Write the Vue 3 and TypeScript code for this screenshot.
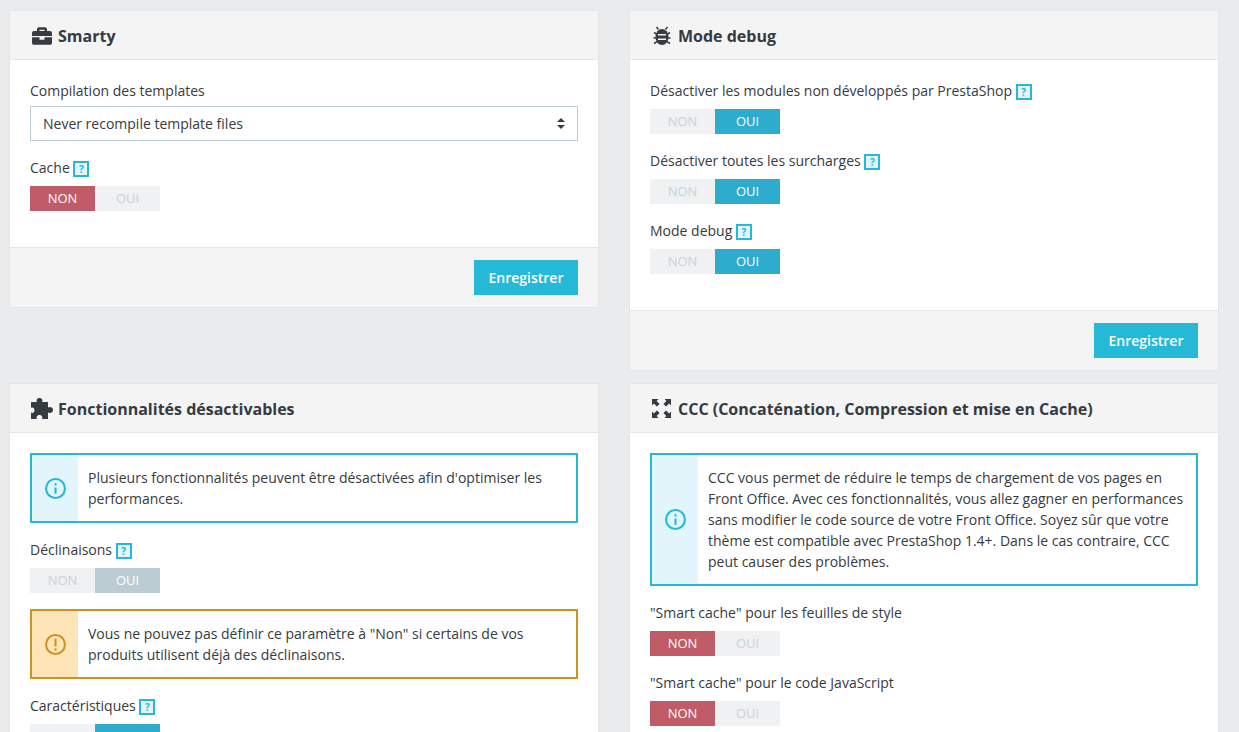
<script setup lang="ts">
interface Field { kind: 'switch'; label: string; help?: boolean; value: 'on' | 'off' | 'locked' }
interface Note { kind: 'info' | 'warn'; text: string }
type Item = Field | Note

const briefcase = 'M320 336c0 8.84-7.16 16-16 16h-96c-8.84 0-16-7.16-16-16v-48H0v144c0 25.6 22.4 48 48 48h416c25.6 0 48-22.4 48-48V288H320v48zm144-208h-80V80c0-25.6-22.4-48-48-48H176c-25.6 0-48 22.4-48 48v48H48c-25.6 0-48 22.4-48 48v80h512v-80c0-25.6-22.4-48-48-48zm-144 0H192V96h128v32z'
const puzzle = 'M0 4H6C5 2.5 5.8 0 8.5 0C11.2 0 12 2.5 11 4H17V9.5C18.5 8.5 22 8.8 22 12C22 15.2 18.5 15.5 17 14.5V21H11C12 19.5 11 17 8.5 17C6 17 5 19.5 6 21H0V14.5C1.5 15.5 3.5 14.5 3.5 12.3C3.5 10 1.5 9 0 10Z'

const debugFields: Item[] = [
  { kind: 'switch', label: 'Désactiver les modules non développés par PrestaShop', help: true, value: 'on' },
  { kind: 'switch', label: 'Désactiver toutes les surcharges', help: true, value: 'on' },
  { kind: 'switch', label: 'Mode debug', help: true, value: 'on' },
]
const featureItems: Item[] = [
  { kind: 'info', text: "Plusieurs fonctionnalités peuvent être désactivées afin d'optimiser les performances." },
  { kind: 'switch', label: 'Déclinaisons', help: true, value: 'locked' },
  { kind: 'warn', text: 'Vous ne pouvez pas définir ce paramètre à "Non" si certains de vos produits utilisent déjà des déclinaisons.' },
  { kind: 'switch', label: 'Caractéristiques', help: true, value: 'on' },
]
const cccItems: Item[] = [
  { kind: 'info', text: 'CCC vous permet de réduire le temps de chargement de vos pages en Front Office. Avec ces fonctionnalités, vous allez gagner en performances sans modifier le code source de votre Front Office. Soyez sûr que votre thème est compatible avec PrestaShop 1.4+. Dans le cas contraire, CCC peut causer des problèmes.' },
  { kind: 'switch', label: '"Smart cache" pour les feuilles de style', value: 'off' },
  { kind: 'switch', label: '"Smart cache" pour le code JavaScript', value: 'off' },
]
const corners = [
  'M0 0h6.5L4.6 1.9l3 3-2.7 2.7-3-3L0 6.5z',
  'M19 0h-6.500l1.900 1.900-3 3 2.700 2.700 3-3L19 6.500z',
  'M0 19h6.500l-1.900-1.900 3-3-2.700-2.700-3 3L0 12.500z',
  'M19 19h-6.500l1.900-1.900-3-3 2.700-2.700 3 3 1.900-1.900z',
]
function isNote(i: Item): i is Note { return i.kind !== 'switch' }
function asField(i: Item): Field { return i as Field }
function asNote(i: Item): Note { return i as Note }
</script>

<template>
  <div class="page">
    <section class="panel">
      <header class="head">
        <span class="slot"><svg class="ico i-case" viewBox="0 0 512 512" width="20" height="20"><path :d="briefcase" /></svg></span>
        <h2>Smarty</h2>
      </header>
      <div class="body">
        <div class="group">
          <label class="lab sel-lab">Compilation des templates</label>
          <div class="select-wrap">
            <select class="select"><option>Never recompile template files</option></select>
            <svg class="sort" viewBox="0 0 8 11" width="8" height="11"><path d="M4 0l4 4H0zM4 11L0 7h8z" /></svg>
          </div>
        </div>
        <div class="group">
          <div class="lab">Cache <span class="help">?</span></div>
          <div class="switch">
            <span class="opt no active">NON</span><span class="opt">OUI</span>
          </div>
        </div>
      </div>
      <footer class="foot"><button class="save">Enregistrer</button></footer>
    </section>

    <section class="panel">
      <header class="head">
        <span class="slot">
          <svg class="ico i-bug" viewBox="0 0 18 20" width="18" height="20">
            <path class="legs" d="M5.500 3.500L3.500 1M12.500 3.500L14.500 1M1 6.500l3 1.800M0.500 12H3.500M1 17.500l3-1.800M17 6.500l-3 1.800M17.500 12H14.500M17 17.500l-3-1.800" />
            <ellipse cx="9" cy="11" rx="6.500" ry="8" />
            <rect class="stripe" x="5" y="8" width="8" height="1.500" />
            <rect class="stripe" x="5" y="12.500" width="8" height="1.500" />
          </svg>
        </span>
        <h2>Mode debug</h2>
      </header>
      <div class="body">
        <div v-for="it in debugFields" :key="asField(it).label" class="group">
          <div class="lab">{{ asField(it).label }} <span class="help">?</span></div>
          <div class="switch">
            <span class="opt">NON</span><span class="opt yes active">OUI</span>
          </div>
        </div>
      </div>
      <footer class="foot"><button class="save">Enregistrer</button></footer>
    </section>

    <section class="panel">
      <header class="head">
        <span class="slot"><svg class="ico i-puzzle" viewBox="0 0 22 21" width="22" height="21"><path :d="puzzle" /></svg></span>
        <h2>Fonctionnalités désactivables</h2>
      </header>
      <div class="body alert-first">
        <template v-for="(it, n) in featureItems" :key="n">
          <div v-if="isNote(it)" class="alert" :class="asNote(it).kind">
            <div class="side">
              <svg viewBox="0 0 20 20" width="21" height="21" fill="none" stroke="currentColor" stroke-width="2">
                <circle cx="10" cy="10" r="9" />
                <path v-if="asNote(it).kind === 'info'" d="M10 9v6M10 5v2.200" />
                <path v-else d="M10 4.500v7.500M10 13.600v2.200" />
              </svg>
            </div>
            <p>{{ asNote(it).text }}</p>
          </div>
          <div v-else class="group">
            <div class="lab">{{ asField(it).label }} <span class="help">?</span></div>
            <div class="switch">
              <span class="opt">NON</span>
              <span class="opt" :class="asField(it).value === 'locked' ? 'locked' : 'yes active'">OUI</span>
            </div>
          </div>
        </template>
      </div>
    </section>

    <section class="panel">
      <header class="head">
        <span class="slot"><svg class="ico i-ccc" viewBox="0 0 19 19" width="19" height="19"><path v-for="c in corners" :key="c" :d="c" /></svg></span>
        <h2>CCC (Concaténation, Compression et mise en Cache)</h2>
      </header>
      <div class="body alert-first">
        <template v-for="(it, n) in cccItems" :key="n">
          <div v-if="isNote(it)" class="alert info">
            <div class="side">
              <svg viewBox="0 0 20 20" width="21" height="21" fill="none" stroke="currentColor" stroke-width="2">
                <circle cx="10" cy="10" r="9" />
                <path d="M10 9v6M10 5v2.200" />
              </svg>
            </div>
            <p>{{ asNote(it).text }}</p>
          </div>
          <div v-else class="group">
            <div class="lab">{{ asField(it).label }}</div>
            <div class="switch">
              <span class="opt no active">NON</span><span class="opt">OUI</span>
            </div>
          </div>
        </template>
      </div>
    </section>
  </div>
</template>

<style>
html, body { margin: 0; background: #eaebec; }
</style>

<style scoped>
.page {
  box-sizing: border-box;
  height: 732px;
  overflow: hidden;
  display: grid;
  grid-template-columns: 590px 590px;
  grid-template-rows: auto auto;
  column-gap: 30px;
  row-gap: 12px;
  align-items: start;
  padding: 10px 0 0 9px;
  background: #eaebec;
  font-family: "Open Sans", "Noto Sans", sans-serif;
  font-size: 14px;
  color: #363a41;
}
.panel {
  box-sizing: border-box;
  background: #fff;
  border: 1px solid #e5e6e7;
}
.head {
  box-sizing: border-box;
  height: 49px;
  display: flex;
  align-items: center;
  gap: 6px;
  padding: 1px 20px 0;
  background: #f4f4f4;
  border-bottom: 1px solid #e5e5e5;
}
.head h2 { margin: 0; font-size: 16px; line-height: 22px; font-weight: 700; color: #363a41; }
.slot { flex: none; width: 22px; height: 22px; display: flex; align-items: center; }
.ico { fill: #363a41; flex: none; }
.i-case { margin-left: 2px; }
.i-bug { margin-left: 3px; }
.i-puzzle { margin-left: 1px; margin-top: -1px; }
.i-ccc { margin-left: 2px; }
.legs { fill: none; stroke: #363a41; stroke-width: 1.500; }
.stripe { fill: #f4f4f4; }
.body { padding: 21px 20px 2px; }
.alert-first { padding-top: 20px; }
.group { margin-bottom: 17px; }
.lab { line-height: 20px; height: 20px; margin-bottom: 8px; white-space: nowrap; }
.sel-lab { display: block; margin-bottom: 5px; }
.help {
  box-sizing: border-box;
  display: inline-block;
  width: 16px;
  height: 16px;
  border: 2px solid #25b9d7;
  background: #e1f5fa;
  color: #25b9d7;
  font-size: 10px;
  font-weight: 700;
  line-height: 12px;
  text-align: center;
  vertical-align: 0;
}
.select-wrap { position: relative; }
.select {
  box-sizing: border-box;
  display: block;
  width: 100%;
  height: 35px;
  padding: 0 12px;
  appearance: none;
  border: 1px solid #bbcdd2;
  border-radius: 0;
  background: #fff;
  color: #363a41;
  font: inherit;
}
.sort { position: absolute; right: 13px; top: 12px; fill: #363a41; }
.switch { display: flex; width: 130px; height: 25px; background: #eff1f2; }
.opt {
  flex: 1;
  text-align: center;
  line-height: 25px;
  font-size: 13px;
  color: #c8d3d7;
}
.opt.active { color: #fff; }
.opt.no { background: #c05c67; }
.opt.yes { background: #2eacce; }
.opt.locked { background: #bbcdd2; color: #fff; }
.alert {
  box-sizing: border-box;
  display: flex;
  margin-bottom: 17px;
  border: 2px solid #25b9d7;
  background: #fff;
}
.alert.warn { margin-top: -1px; border-color: #cd9321; }
.side {
  flex: none;
  width: 46px;
  display: flex;
  align-items: center;
  justify-content: center;
  background: #e1f5fa;
  color: #25b9d7;
}
.warn .side { background: #fde5b8; color: #cd9321; }
.alert p { margin: 0; padding: 12px 10px; line-height: 21px; }
.foot {
  display: flex;
  justify-content: flex-end;
  padding: 12px 20px;
  background: #f4f4f4;
  border-top: 1px solid #e5e5e5;
  margin-top: 17px;
}
.save {
  width: 104px;
  height: 35px;
  border: 0;
  border-radius: 0;
  background: #25b9d7;
  color: #fff;
  font: 600 14px "Open Sans", sans-serif;
}
</style>
